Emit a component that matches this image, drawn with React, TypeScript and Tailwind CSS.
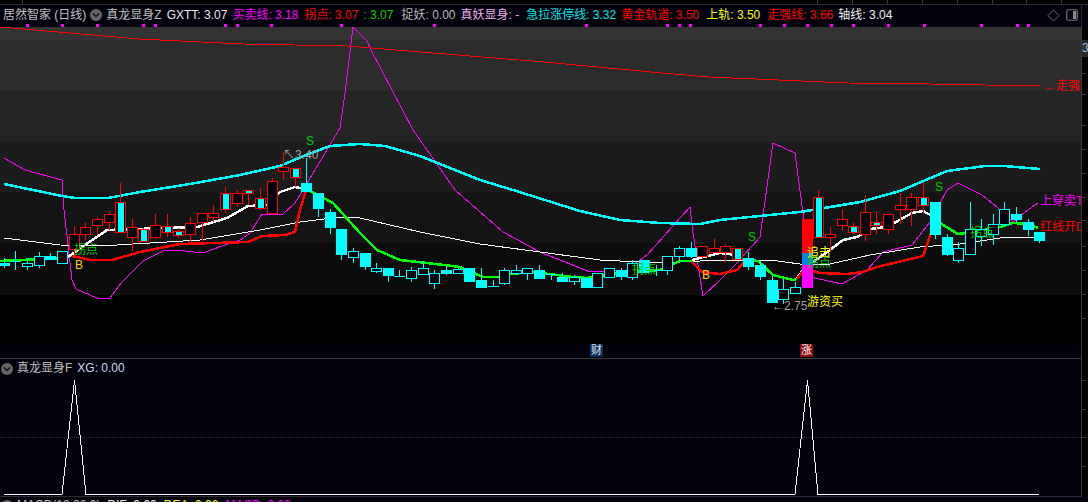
import React from 'react';

// x, bodyTop, bodyBottom, wickTop, wickBottom, kind
// kind: c = cyan hollow, f = cyan filled, r = red hollow, x = red frame with cyan core
type Kind = 'c' | 'f' | 'r' | 'x';
type Candle = [number, number, number, number, number, Kind];

const candles: Candle[] = [
  [4, 263, 265, 258, 268, 'f'], [15, 261, 261, 251, 270, 'c'], [27, 263, 266, 258, 270, 'c'],
  [39, 256, 265, 252, 268, 'c'], [50, 256, 259, 253, 260, 'f'], [62, 251, 263, 251, 264, 'c'],
  [74, 234, 249, 226, 255, 'r'], [85, 227, 234, 223, 240, 'r'], [97, 219, 225, 217, 235, 'r'],
  [109, 214, 222, 212, 230, 'r'], [120, 202, 232, 183, 232, 'x'], [132, 227, 237, 219, 251, 'r'],
  [143, 229, 241, 228, 242, 'x'], [155, 225, 237, 214, 239, 'r'], [167, 226, 232, 214, 237, 'x'],
  [178, 231, 235, 228, 238, 'x'], [190, 223, 234, 217, 243, 'r'], [202, 213, 222, 213, 241, 'r'],
  [213, 213, 217, 205, 222, 'r'], [225, 193, 209, 187, 213, 'x'], [237, 193, 203, 190, 207, 'r'],
  [248, 190, 193, 190, 205, 'x'], [260, 198, 208, 188, 210, 'x'], [272, 181, 213, 178, 215, 'r'],
  [283, 167, 171, 152, 180, 'r'], [295, 168, 177, 168, 187, 'x'], [306, 183, 191, 158, 192, 'f'],
  [318, 193, 208, 193, 217, 'f'], [330, 212, 227, 209, 234, 'f'], [341, 229, 254, 229, 260, 'f'],
  [353, 251, 257, 248, 263, 'c'], [365, 253, 266, 253, 270, 'f'], [376, 268, 271, 263, 273, 'c'],
  [388, 268, 275, 268, 282, 'f'], [399, 276, 276, 270, 277, 'c'], [411, 270, 278, 267, 282, 'c'],
  [423, 268, 274, 261, 275, 'c'], [434, 273, 283, 270, 289, 'c'], [446, 270, 273, 267, 275, 'f'],
  [458, 269, 273, 266, 274, 'c'], [469, 268, 281, 268, 281, 'f'], [481, 280, 287, 268, 287, 'f'],
  [493, 286, 286, 280, 287, 'c'], [504, 270, 283, 268, 285, 'c'], [516, 270, 273, 265, 275, 'c'],
  [527, 268, 273, 268, 280, 'c'], [539, 270, 278, 265, 278, 'f'], [551, 274, 274, 273, 280, 'c'],
  [562, 277, 281, 273, 282, 'f'], [574, 277, 281, 275, 285, 'c'], [586, 278, 287, 277, 287, 'f'],
  [597, 273, 287, 273, 287, 'c'], [609, 268, 277, 268, 277, 'c'], [621, 270, 276, 268, 280, 'f'],
  [632, 263, 277, 260, 280, 'c'], [644, 260, 272, 260, 273, 'f'], [656, 270, 270, 265, 276, 'c'],
  [667, 256, 270, 256, 275, 'c'], [679, 248, 256, 246, 261, 'c'], [691, 248, 256, 242, 258, 'f'],
  [702, 246, 256, 246, 259, 'r'], [714, 248, 252, 239, 253, 'r'], [725, 246, 252, 244, 262, 'r'],
  [737, 248, 259, 248, 259, 'x'], [748, 258, 266, 252, 270, 'f'], [760, 265, 276, 261, 280, 'f'],
  [772, 280, 302, 276, 303, 'f'], [783, 289, 299, 279, 304, 'c'], [795, 287, 293, 282, 294, 'c'],
  [818, 197, 237, 190, 237, 'x'], [830, 234, 237, 227, 252, 'r'], [842, 219, 225, 209, 231, 'r'],
  [853, 226, 232, 223, 234, 'x'], [865, 212, 234, 195, 241, 'r'], [876, 222, 225, 212, 234, 'x'],
  [888, 214, 229, 214, 234, 'r'], [900, 205, 209, 193, 224, 'r'], [911, 197, 209, 193, 226, 'r'],
  [923, 197, 205, 182, 213, 'x'], [935, 202, 234, 202, 239, 'f'], [947, 237, 254, 234, 256, 'f'],
  [958, 248, 260, 242, 263, 'c'], [970, 229, 254, 202, 254, 'c'], [981, 229, 236, 219, 246, 'c'],
  [993, 224, 234, 214, 245, 'c'], [1004, 209, 224, 202, 227, 'c'], [1016, 214, 219, 207, 223, 'f'],
  [1028, 222, 229, 219, 236, 'f'], [1039, 232, 240, 232, 243, 'f'],
];

const redTrend = '0,27 139,39 243,44 347,46 544,62 662,73 709,77 848,83 930,84 1040,86';
const cyanBand = '4,184 62,196 75,198 108,198 140,192 190,184 240,175 280,166 306,155 330,146 360,144 385,146 420,156 480,180 513,190 580,211 620,220 660,223 700,224 720,220 800,212 860,202 900,191 947,171 985,166 1004,166 1040,169';
const whiteMa = '4,238 60,245 100,246 200,240 260,230 300,222 340,217 360,218 420,232 480,244 540,252 600,260 640,262 680,262 720,260 770,260 800,264 830,264 870,255 920,247 960,244 1000,238 1040,237';
const magenta = '4,158 25,170 62,180 64,210 72,280 76,289 97,298 110,298 122,282 143,261 165,250 185,251 203,253 222,246 240,240 250,233 262,214 283,214 295,203 306,185 340,128 345,93 353,27 367,41 371,50 413,130 455,190 503,232 540,252 590,272 627,270 647,255 690,207 693,233 703,296 720,280 737,263 760,237 773,143 795,153 803,213 810,277 842,284 867,270 883,252 912,245 930,222 947,190 958,183 982,195 1003,212 1013,222 1025,212 1038,203';

const thick: [string, string][] = [
  ['#00ff00', '0,261 62,258'],
  ['#ff0000', '68,255 90,260 112,260 140,252 180,244 248,242 262,236 285,235 295,232 300,210 306,190'],
  ['#ffffff', '68,257 85,245 107,230 197,227 227,218 248,206 267,205 280,192 295,187 306,189'],
  ['#00ff00', '310,191 333,203 360,233 377,250 400,260 427,263 460,267 483,277 498,277 510,274 533,272 573,277 587,278 620,273 660,270 680,261 692,261'],
  ['#ff0000', '692,262 702,272 720,274 737,270 744,262'],
  ['#ffffff', '692,260 720,253 743,256'],
  ['#00ff00', '743,262 748,260 758,261 773,275 793,280 797,279'],
  ['#ffffff', '797,278 803,270'],
  ['#ff0000', '797,279 803,271 813,271 820,273 847,274 863,272 877,267 923,256 933,227'],
  ['#ffffff', '813,262 830,250 843,240 857,237 870,229 887,227 912,213 923,211 932,216'],
  ['#00ff00', '940,223 958,234 973,232 1000,227 1013,223 1027,224 1038,228'],
];

const markers = [26, 61, 96, 142, 154, 224, 236, 270, 340, 433, 585, 666, 678, 689, 759, 783, 806, 830, 852, 887, 923, 980, 1016, 1027];
const topTicks = [22, 817, 852, 887, 922, 957, 992, 1026, 1061];
const mainAxisTicks = [20, 46, 67, 98, 122, 146, 170, 193, 219, 243, 267, 291];
const subAxisTicks = [21, 50, 78, 107];
const bands = [
  'h-[13px] bg-[#333333]', 'h-[51px] bg-[#2c2c2c]', 'h-[51px] bg-[#242424]', 'h-[50px] bg-[#1c1c1c]',
  'h-[51px] bg-[#141414]', 'h-[52px] bg-[#0c0c0c]', 'h-[50px] bg-[#000000]', 'h-[13px] bg-[#00000c]',
];

const font = { fontFamily: '"Liberation Sans", "Noto Sans CJK SC", sans-serif' };

function CandleMark({ c }: { c: Candle }) {
  const [x, top, bottom, wt, wb, kind] = c;
  const stroke = kind === 'c' || kind === 'f' ? '#00ffff' : '#ff0000';
  const fill = kind === 'f' ? '#00ffff' : '#02020c';
  return (
    <g>
      <rect x={x} y={wt} width={1} height={wb - wt} fill={stroke} />
      {top === bottom ? (
        <rect x={x - 5} y={top} width={11} height={1} fill={stroke} />
      ) : (
        <rect x={x - 4.5} y={top + 0.5} width={10} height={bottom - top} fill={fill} stroke={stroke} strokeWidth={1} />
      )}
      {kind === 'x' && <rect x={x - 2} y={top + 1} width={6} height={bottom - top - 1} fill="#00ffff" />}
    </g>
  );
}

function Chevron() {
  return (
    <span className="flex h-[12px] w-[12px] shrink-0 items-center justify-center rounded-full bg-[#666666]">
      <svg width="8" height="6" viewBox="0 0 8 6">
        <path d="M1 1.5 L4 4.5 L7 1.5" fill="none" stroke="#101010" strokeWidth="1.4" />
      </svg>
    </span>
  );
}

function Label({ className, children }: { className: string; children: React.ReactNode }) {
  return <span className={`absolute whitespace-nowrap leading-none ${className}`}>{children}</span>;
}

export default function App() {
  return (
    <div className="flex h-[502px] w-[1088px] flex-col overflow-hidden bg-[#02020c]" style={font}>
      {/* top time ticks */}
      <div className="relative h-[5px] shrink-0 border-b border-[#2a2a2a] bg-black">
        {topTicks.map(x => (
          <div key={x} className="absolute top-0 h-[4px] w-px bg-[#3a3a3a]" style={{ left: x }} />
        ))}
      </div>

      {/* indicator legend */}
      <div className="relative flex h-[22px] shrink-0 items-start whitespace-nowrap pl-[3px] pt-[3px] text-[12px] leading-[15px]">
        <span className="text-[#c0c0c0]">居然智家 (日线)</span>
        <span className="ml-[4px] mt-[1px]"><Chevron /></span>
        <span className="ml-[4px] text-[#c0c0c0]">真龙显身Z</span>
        <span className="ml-[5px] text-[#e8e8e8]">GXTT: 3.07</span>
        <span className="ml-[5px] text-[#ff00ff]">买卖线: 3.18</span>
        <span className="ml-[6px] text-[#ff0000]">拐点: 3.07</span>
        <span className="ml-[5px] text-[#00d000]">: 3.07</span>
        <span className="ml-[8px] text-[#b8b8b8]">捉妖: 0.00</span>
        <span className="ml-[5px] text-[#f0b0f0]">真妖显身: -</span>
        <span className="ml-[7px] text-[#00e8e8]">急拉涨停线: 3.32</span>
        <span className="ml-[5px] text-[#ff0000]">黄金轨道: 3.50</span>
        <span className="ml-[7px] text-[#ffff00]">上轨: 3.50</span>
        <span className="ml-[7px] text-[#ff0000]">走强线: 3.66</span>
        <span className="ml-[5px] text-[#f0f0f0]">轴线: 3.04</span>
        <svg className="absolute left-[1047px] top-[4px]" width="13" height="13" viewBox="0 0 13 13">
          <path d="M6.5 1 L12 6.5 L6.5 12 L1 6.5 Z" fill="none" stroke="#6a6a6a" />
        </svg>
        <svg className="absolute left-[1066px] top-[4px]" width="12" height="12" viewBox="0 0 12 12">
          <rect x="0.75" y="0.75" width="10.5" height="10.5" rx="1.5" fill="none" stroke="#777777" strokeWidth="1.2" />
          <rect x="7" y="2" width="3" height="8" fill="#8a8a8a" />
        </svg>
        {markers.map(x => (
          <div key={x} className="absolute top-[19px] h-[3px] w-[3px] bg-[#ff00ff]" style={{ left: x }} />
        ))}
        <div className="absolute left-[1081px] top-0 h-[22px] w-px bg-[#2a2a2a]" />
      </div>

      {/* main chart and price axis */}
      <div className="flex h-[332px] shrink-0">
        <div className="relative w-[1081px] overflow-hidden border-b border-[#3a3a3a] text-[12px]">
          <div className="flex flex-col">
            {bands.map(b => (
              <div key={b} className={b} />
            ))}
          </div>
          <svg className="absolute left-0 top-0" width="1081" height="331" viewBox="0 27 1081 331" shapeRendering="crispEdges">
            <polyline points={magenta} fill="none" stroke="#ff00ff" strokeWidth="1" />
            <polyline points={whiteMa} fill="none" stroke="#ffffff" strokeWidth="1" />
            <polyline points={cyanBand} fill="none" stroke="#00ffff" strokeWidth="2.5" />
            {thick.map(([color, points]) => (
              <polyline key={points} points={points} fill="none" stroke={color} strokeWidth="2.5" />
            ))}
            {candles.map(c => (
              <CandleMark key={c[0]} c={c} />
            ))}
            <polyline points={redTrend} fill="none" stroke="#ff0000" strokeWidth="1" />
            <rect x="802" y="219" width="11" height="34" fill="#ff0000" />
            <rect x="802" y="253" width="11" height="12" fill="#0a84e0" />
            <rect x="802" y="265" width="11" height="23" fill="#ff00ff" />
          </svg>
          <Label className="left-[74px] top-[217px] text-[#00c800]">拐点</Label>
          <Label className="left-[75px] top-[232px] text-[#ffd000]">B</Label>
          <Label className="left-[306px] top-[108px] text-[#00c800]">S</Label>
          <Label className="left-[283px] top-[122px] text-[#a0a0a0]">↖3.40</Label>
          <Label className="left-[632px] top-[237px] text-[#00c800]">拐点</Label>
          <Label className="left-[702px] top-[242px] text-[#ffd000]">B</Label>
          <Label className="left-[748px] top-[204px] text-[#00c800]">S</Label>
          <Label className="left-[807px] top-[220px] text-[#ffff00]">追击</Label>
          <Label className="left-[807px] top-[230px] text-[#00c800]">拐点</Label>
          <Label className="left-[807px] top-[269px] text-[#ffff00]">游资买</Label>
          <Label className="left-[772px] top-[273px] text-[#a0a0a0]">←2.75</Label>
          <Label className="left-[935px] top-[154px] text-[#00c800]">S</Label>
          <Label className="left-[970px] top-[200px] text-[#00c800]">拐点</Label>
          <Label className="left-[1040px] top-[168px] text-[#ff00ff]">上穿卖T</Label>
          <Label className="left-[1040px] top-[194px] text-[#ff0000]">红线开D</Label>
          <Label className="left-[1044px] top-[53px] text-[#ff0000]">←走强线</Label>
          <span className="absolute left-[590px] top-[317px] flex h-[13px] w-[13px] items-center justify-center bg-[#0c2c58] text-[11px] leading-none text-[#dfe8f5]">财</span>
          <span className="absolute left-[800px] top-[317px] flex h-[13px] w-[13px] items-center justify-center bg-[#8c0a0a] text-[11px] leading-none text-white">涨</span>
        </div>
        <div className="relative w-[7px] border-l border-[#3a3a3a] bg-black">
          <span className="absolute left-0 top-[13px] h-[17px] w-[7px] overflow-hidden bg-[#2a2a2a] text-[12px] leading-[17px] text-[#9fc0e8]">3</span>
          {mainAxisTicks.map(y => (
            <div key={y} className="absolute left-0 h-px w-[4px] bg-[#3a3a3a]" style={{ top: y }} />
          ))}
        </div>
      </div>

      {/* sub chart */}
      <div className="flex h-[138px] shrink-0">
        <div className="relative w-[1081px] overflow-hidden border-b border-[#2e2e2e] bg-[#02020c]">
          <div className="flex items-center gap-[4px] pl-[1px] pt-[2px] text-[12px] leading-[15px]">
            <Chevron />
            <span className="text-[#c0c0c0]">真龙显身F</span>
            <span className="ml-[1px] text-[#c8d8f0]">XG: 0.00</span>
          </div>
          <div className="absolute left-0 top-[78px] w-[1081px] border-t border-dotted border-[#3a3a3a]" />
          <svg className="absolute left-0 top-0" width="1081" height="138" viewBox="0 359 1081 138" shapeRendering="crispEdges">
            <polyline
              points="4,494.5 62,494.5 74.5,380 86,494.5 795,494.5 807.5,380 818,494.5 1039,494.5"
              fill="none"
              stroke="#ffffff"
              strokeWidth="1"
            />
          </svg>
        </div>
        <div className="relative w-[7px] border-l border-[#3a3a3a] bg-black">
          {subAxisTicks.map(y => (
            <div key={y} className="absolute left-0 h-px w-[4px] bg-[#3a3a3a]" style={{ top: y }} />
          ))}
        </div>
      </div>

      {/* next pane, cut off by the window */}
      <div className="flex items-center gap-[4px] pl-[1px] pt-[1px] text-[12px] leading-[15px]">
        <Chevron />
        <span className="text-[#c0c0c0]">MACD(12,26,9)</span>
        <span className="ml-[3px] text-[#f0f0f0]">DIF: 0.00</span>
        <span className="ml-[3px] text-[#ffff00]">DEA: 0.00</span>
        <span className="ml-[3px] text-[#ff00ff]">MACD: 0.00</span>
      </div>
    </div>
  );
}
